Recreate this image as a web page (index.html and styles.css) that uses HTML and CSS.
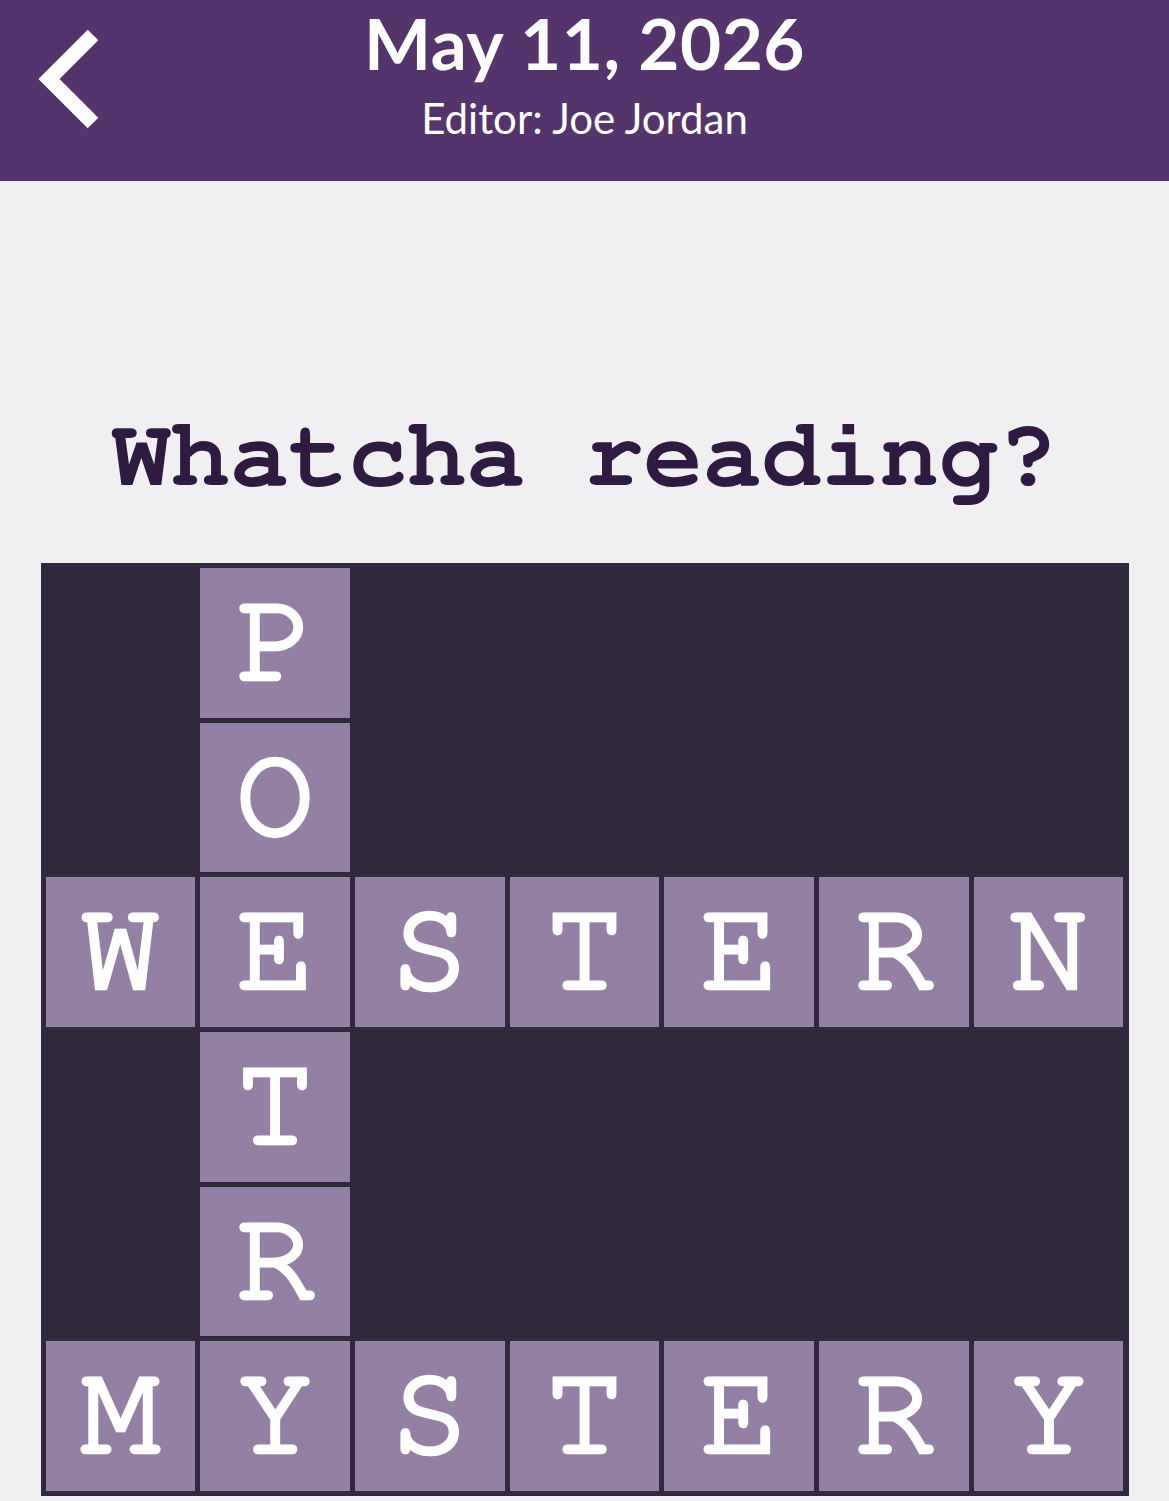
FILE: index.html
```html
<!DOCTYPE html>
<html>
<head>
<meta charset="utf-8">
<link rel="stylesheet" href="styles.css">
</head>
<body>
<header class="topbar">
  <a class="back" aria-label="Back">
    <svg width="64" height="100" viewBox="0 0 64 100"><polyline points="56,6 12,50 56,94" fill="none" stroke="#fff" stroke-width="15" stroke-linejoin="miter" stroke-linecap="butt"/></svg>
  </a>
  <div class="titles">
    <div class="date">May 11, 2026</div>
    <div class="editor">Editor: Joe Jordan</div>
  </div>
</header>
<main class="content">
  <h1 class="clue">Whatcha reading?</h1>
  <div class="board">
    <div class="cell empty"></div><div class="cell">P</div><div class="cell empty"></div><div class="cell empty"></div><div class="cell empty"></div><div class="cell empty"></div><div class="cell empty"></div>
    <div class="cell empty"></div><div class="cell">O</div><div class="cell empty"></div><div class="cell empty"></div><div class="cell empty"></div><div class="cell empty"></div><div class="cell empty"></div>
    <div class="cell">W</div><div class="cell">E</div><div class="cell">S</div><div class="cell">T</div><div class="cell">E</div><div class="cell">R</div><div class="cell">N</div>
    <div class="cell empty"></div><div class="cell">T</div><div class="cell empty"></div><div class="cell empty"></div><div class="cell empty"></div><div class="cell empty"></div><div class="cell empty"></div>
    <div class="cell empty"></div><div class="cell">R</div><div class="cell empty"></div><div class="cell empty"></div><div class="cell empty"></div><div class="cell empty"></div><div class="cell empty"></div>
    <div class="cell">M</div><div class="cell">Y</div><div class="cell">S</div><div class="cell">T</div><div class="cell">E</div><div class="cell">R</div><div class="cell">Y</div>
  </div>
</main>
</body>
</html>
```
FILE: styles.css
```css
html, body {
  margin: 0;
  padding: 0;
  background: #f0f0f2;
}
body {
  width: 1169px;
  height: 1501px;
  overflow: hidden;
  font-family: Lato, "Noto Sans", sans-serif;
}
.topbar {
  position: relative;
  height: 181px;
  background: #55336c;
  display: flex;
  justify-content: center;
}
.back {
  position: absolute;
  left: 37px;
  top: 29px;
  display: block;
}
.back svg { display: block; }
.titles {
  display: flex;
  flex-direction: column;
  align-items: center;
  color: #fff;
  padding-top: 3px;
}
.date {
  font-size: 71px;
  font-weight: 700;
  line-height: 80px;
  letter-spacing: 0.5px;
}
.editor {
  font-size: 42px;
  font-weight: 400;
  line-height: 50px;
  margin-top: 10px;
}
.content {
  display: flex;
  flex-direction: column;
  align-items: center;
}
.clue {
  margin: 220px 0 0 0;
  font-family: "Nimbus Mono PS", "Nimbus Mono L", FreeMono, "Courier 10 Pitch", "Liberation Mono", monospace;
  font-weight: 700;
  font-size: 98.5px;
  line-height: 110px;
  color: #2f1a42;
  letter-spacing: 0;
}
.board {
  margin-top: 52px;
  width: 1088px;
  box-sizing: border-box;
  padding: 5px;
  background: #30283d;
  display: grid;
  grid-template-columns: repeat(7, 1fr);
  grid-auto-rows: 149.7px;
  gap: 5px;
}
.cell {
  background: #9480a4;
  color: #fff;
  display: flex;
  align-items: center;
  justify-content: center;
  padding-bottom: 6px;
  box-sizing: border-box;
  font-family: "Nimbus Mono PS", "Nimbus Mono L", FreeMono, "Courier 10 Pitch", "Liberation Mono", monospace;
  font-weight: 400;
  font-size: 130px;
  line-height: 1;
  -webkit-text-stroke: 4.5px #fff;
  paint-order: stroke fill;
}
.cell.empty {
  background: transparent;
}
```
